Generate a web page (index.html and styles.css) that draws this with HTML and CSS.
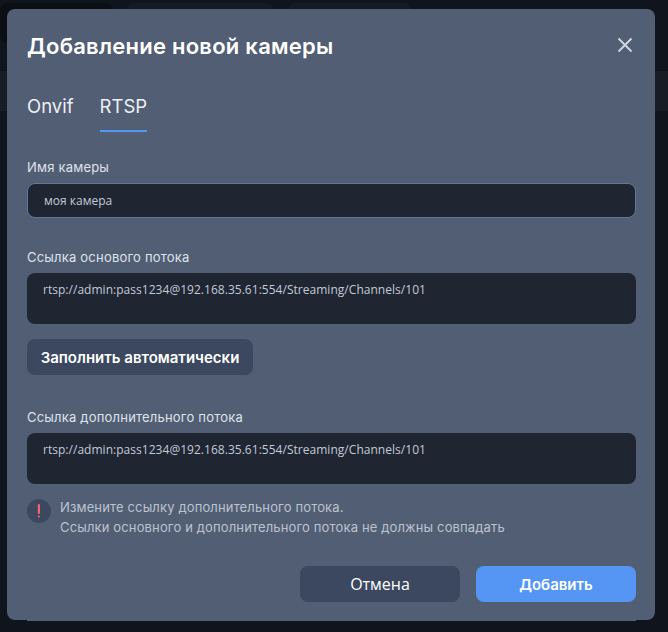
FILE: index.html
```html
<!DOCTYPE html>
<html lang="ru">

<head>
    <meta charset="UTF-8">
    <meta name="viewport" content="width=device-width, initial-scale=1.0">
    <title>Добавление новой камеры</title>
    <link rel="stylesheet" href="styles.css">
</head>

<body>
    <div class="page">
        <div class="page-tabs">
            <div class="page-tab page-tab-dark"></div>
            <div class="page-tab page-tab-one"></div>
            <div class="page-tab page-tab-two"></div>
        </div>
        <div class="page-row"></div>
    </div>

    <div class="modal-shadow"></div>
    <div class="modal">
        <div class="modal-head">
            <h2 class="modal-title">Добавление новой камеры</h2>
            <button class="close" aria-label="Закрыть">
                <svg width="16" height="16" viewBox="0 0 16 16">
                    <path d="M1.5 1.5 L14.5 14.5 M14.5 1.5 L1.5 14.5" stroke="#ced4e0" stroke-width="2" fill="none"></path>
                </svg>
            </button>
        </div>

        <div class="tabs">
            <div class="tab">Onvif</div>
            <div class="tab active">RTSP</div>
        </div>

        <label class="label label-first">Имя камеры</label>
        <div class="input">моя камера</div>

        <label class="label label-second">Ссылка основого потока</label>
        <div class="textarea">rtsp://admin:pass1234@192.168.35.61:554/Streaming/Channels/101</div>

        <button class="btn-auto">Заполнить автоматически</button>

        <label class="label label-third">Ссылка дополнительного потока</label>
        <div class="textarea">rtsp://admin:pass1234@192.168.35.61:554/Streaming/Channels/101</div>

        <div class="warning">
            <svg class="warning-icon" width="24" height="24" viewBox="0 0 24 24">
                <circle cx="12" cy="12" r="12" fill="#3b4860"></circle>
                <rect x="10.8" y="5" width="2.2" height="10" rx="1" fill="#f4646c"></rect>
                <rect x="10.8" y="16.4" width="2.2" height="2.2" rx="1" fill="#f4646c"></rect>
            </svg>
            <p class="warning-text">Измените ссылку дополнительного потока.<br>Ссылки основного и дополнительного потока не должны совпадать</p>
        </div>

        <div class="actions">
            <button class="btn btn-cancel">Отмена</button>
            <button class="btn btn-add">Добавить</button>
        </div>
    </div>
</body>

</html>
```

FILE: styles.css
```css
* {
    box-sizing: border-box;
}

body {
    margin: 0;
    height: 632px;
    overflow: hidden;
    background-color: #10141c;
    font-family: 'Inter', 'Noto Sans', sans-serif;
}

/* dimmed page behind the dialog */
.page-tabs {
    display: flex;
    gap: 14px;
    padding-top: 3px;
}

.page-tab {
    height: 40px;
    border-radius: 8px;
}

.page-tab-dark {
    width: 113px;
    background-color: #0b0e13;
}

.page-tab-one {
    width: 147px;
    background-color: #151a24;
}

.page-tab-two {
    width: 124px;
    background-color: #151a24;
}

.page-row {
    height: 40px;
    margin-top: 28px;
    background-color: #181c25;
}

.modal,
.modal-shadow {
    position: absolute;
    background-color: #525e74;
}

.modal-shadow {
    left: 27px;
    top: 600px;
    width: 609px;
    height: 21px;
}

.modal {
    left: 7px;
    top: 9px;
    width: 648px;
    height: 611px;
    border-radius: 8px;
    padding: 20px 19px 0 20px;
}

.modal-head {
    display: flex;
    justify-content: space-between;
    align-items: center;
}

.modal-title {
    margin: 0;
    color: #fff;
    font-size: 22px;
    line-height: 34px;
    font-weight: 600;
    letter-spacing: 0.25px;
}

.close {
    background: none;
    border: none;
    padding: 0;
    margin: 0 3px 2px 0;
    display: flex;
}

.tabs {
    display: flex;
    gap: 26px;
    margin-top: 29px;
}

.tab {
    color: #eef0f4;
    font-size: 18.5px;
    line-height: 28px;
    padding-bottom: 10px;
    border-bottom: 2px solid transparent;
}

.tab.active {
    border-bottom-color: #5596f5;
}

.label {
    display: block;
    color: #dfe3ea;
    font-size: 13px;
    line-height: 18px;
    letter-spacing: 0.2px;
}

.label-first {
    margin-top: 26px;
    margin-bottom: 7px;
}

.label-second {
    margin-top: 30px;
    margin-bottom: 7px;
}

.label-third {
    margin-top: 33px;
    margin-bottom: 7px;
}

.input {
    height: 35px;
    background-color: #1f2531;
    border: 1px solid #64779a;
    border-radius: 8px;
    padding: 0 16px;
    color: #c3cbd9;
    font-family: 'Open Sans', 'Noto Sans', sans-serif;
    font-size: 12px;
    line-height: 34px;
}

.textarea {
    height: 51px;
    background-color: #1f2531;
    border-radius: 8px;
    padding: 8px 16px;
    color: #c3cbd9;
    font-family: 'Open Sans', 'Noto Sans', sans-serif;
    font-size: 12px;
    line-height: 18px;
    letter-spacing: 0.03px;
}

.btn-auto {
    display: block;
    width: 226px;
    height: 36px;
    margin-top: 15px;
    padding: 0;
    background-color: #3b4860;
    border: none;
    border-radius: 8px;
    color: #fff;
    font-family: inherit;
    font-size: 15px;
    font-weight: 600;
}

.warning {
    display: flex;
    gap: 9px;
    margin-top: 13px;
}

.warning-icon {
    flex: none;
    margin-top: 2px;
}

.warning-text {
    margin: 0;
    color: #bcc3d0;
    font-size: 13px;
    line-height: 20px;
    letter-spacing: 0.14px;
}

.actions {
    display: flex;
    justify-content: flex-end;
    gap: 16px;
    margin-top: 29px;
}

.btn {
    width: 160px;
    height: 36px;
    border: none;
    border-radius: 8px;
    color: #fff;
}

.btn-cancel {
    background-color: #3b4860;
    font-family: 'Open Sans', 'Noto Sans', sans-serif;
    font-size: 16px;
}

.btn-add {
    background-color: #5596f5;
    font-family: inherit;
    font-size: 15px;
    font-weight: 600;
}
```
